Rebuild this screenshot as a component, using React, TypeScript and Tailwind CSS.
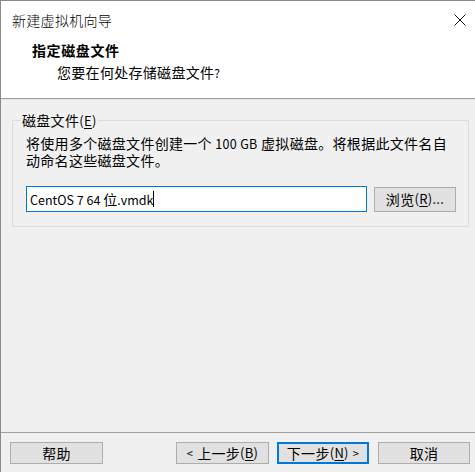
const font = { fontFamily: '"Noto Sans CJK SC", "Noto Sans", sans-serif' }

function Btn({
  children,
  w,
  primary,
  className = "",
}: {
  children: React.ReactNode
  w: string
  primary?: boolean
  className?: string
}) {
  return (
    <button
      className={`${w} h-[22px] flex items-center justify-center bg-[#e1e1e1] text-[14px] leading-[16px] text-black ${
        primary ? "border-2 border-[#0078d7]" : "border border-[#adadad]"
      } ${className}`}
    >
      {children}
    </button>
  )
}

function U({ children }: { children: React.ReactNode }) {
  return <span className="underline underline-offset-2">{children}</span>
}

export default function App() {
  return (
    <div
      className="w-[475px] h-[472px] flex flex-col bg-[#f0f0f0] border-l border-t border-[#8a8a8a] text-black tracking-[0.3px]"
      style={font}
    >
      {/* header */}
      <div className="h-[97px] bg-white pt-[11px] flex flex-col">
        <div className="flex items-start justify-between pl-[11px] pr-[9px]">
          <span className="text-[14px] leading-[16px] font-light">新建虚拟机向导</span>
          <svg width="12" height="12" viewBox="0 0 12 12" className="mt-[2px]">
            <path d="M0.5 0.5 L11.5 11.5 M11.5 0.5 L0.5 11.5" stroke="#111" strokeWidth="1" />
          </svg>
        </div>
        <div className="mt-[14px] pl-[31px] text-[14px] leading-[16px] font-bold tracking-[0.6px]">指定磁盘文件</div>
        <div className="mt-[6px] pl-[56px] text-[14px] leading-[16px]">
          您要在何处存储磁盘文件<span className="text-[12px]">?</span>
        </div>
      </div>
      <div className="h-px bg-[#a0a0a0]" />
      <div className="h-px bg-[#e3e3e3]" />

      {/* body */}
      <div className="flex-1 pl-[11px] pt-[20px]">
        <div className="relative w-[457px] border border-[#dcdcdc] pl-[13px] pt-[14px] pb-[14px]">
          <span className="absolute left-[8px] top-[-9px] bg-[#f0f0f0] px-[1px] text-[14px] leading-[16px]">
            磁盘文件<span className="text-[13px]">(<U>E</U>)</span>
          </span>
          <div className="text-[14px] leading-[16px] whitespace-nowrap">
            将使用多个磁盘文件创建一个 <span className="text-[12.5px]">100 GB</span> 虚拟磁盘。将根据此文件名自
          </div>
          <div className="text-[14px] leading-[16px] whitespace-nowrap">动命名这些磁盘文件。</div>
          <div className="mt-[18px] flex items-center gap-[7px]">
            <div className="w-[341px] h-[26px] bg-white border border-[#0078d7] flex items-center pl-[3px] text-[14px] leading-[16px] tracking-normal">
              <span className="whitespace-pre">
                <span className="text-[12.5px]">CentOS 7 64 </span>位<span className="text-[12.5px]">.vmdk</span>
              </span>
              <span className="w-px h-[16px] bg-black" />
            </div>
            <Btn w="w-[82px]" className="h-[25px]">
              浏览<span className="text-[13px]">(<U>R</U>)...</span>
            </Btn>
          </div>
        </div>
      </div>

      {/* footer */}
      <div className="h-px bg-[#a0a0a0]" />
      <div className="flex pl-[9px] pr-[5px] pt-[9px] pb-[8px]">
        <Btn w="w-[93px]">帮助</Btn>
        <div className="ml-auto flex">
          <Btn w="w-[93px]" className="mr-[8px]">
            <span className="text-[11px] mr-[4px]">&lt;</span>上一步<span className="text-[13px]">(<U>B</U>)</span>
          </Btn>
          <Btn w="w-[92px]" primary className="mr-[9px]">
            下一步<span className="text-[13px]">(<U>N</U>)</span>
            <span className="text-[11px] ml-[4px]">&gt;</span>
          </Btn>
          <Btn w="w-[92px]">取消</Btn>
        </div>
      </div>
    </div>
  )
}
